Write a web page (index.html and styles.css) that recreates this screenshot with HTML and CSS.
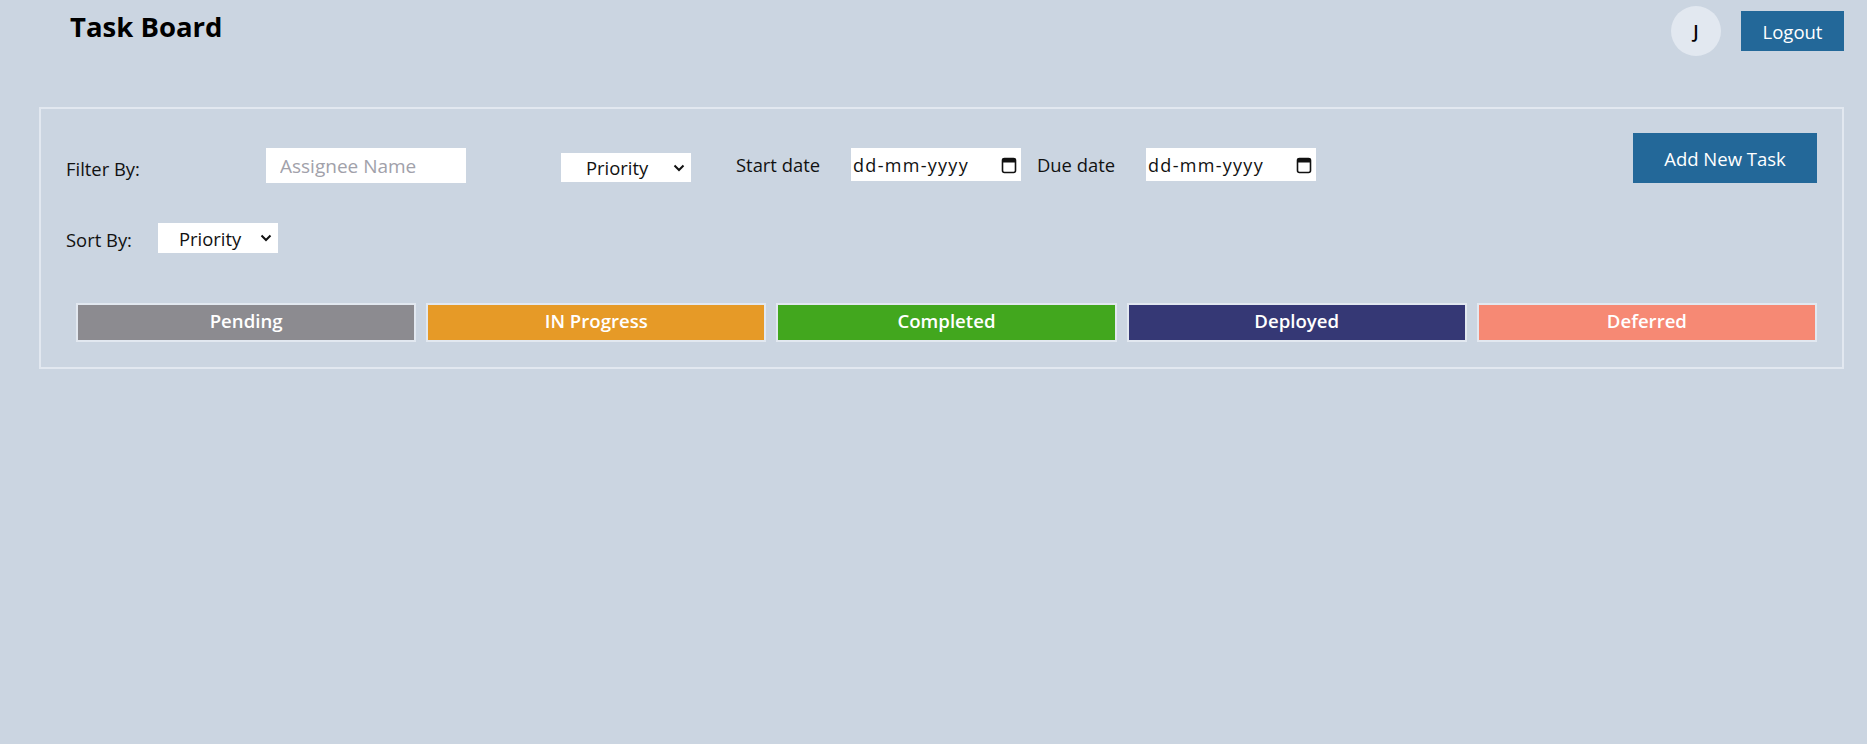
FILE: index.html
```html
<!DOCTYPE html>
<html lang="en">
<head>
<meta charset="utf-8">
<title>Task Board</title>
<link rel="stylesheet" href="styles.css">
</head>
<body>
<header class="header">
  <h1 class="title">Task Board</h1>
  <div class="user">
    <div class="avatar">J</div>
    <button class="btn logout">Logout</button>
  </div>
</header>
<main class="panel">
  <div class="filter-row">
    <span class="label label-filter">Filter By:</span>
    <input class="text-input" type="text" placeholder="Assignee Name">
    <span class="select-wrap select-filter">
      <select class="select"><option>Priority</option></select>
      <svg class="chevron" viewBox="0 0 12 8" width="12" height="8"><path d="M1.5 1.5 L6 6 L10.5 1.5" fill="none" stroke="#111" stroke-width="2"/></svg>
    </span>
    <span class="label label-start">Start date</span>
    <span class="date-input">
      <span class="date-text">dd-mm-yyyy</span>
      <svg class="cal" viewBox="0 0 16 18" width="16" height="18"><rect x="1.5" y="2.5" width="13" height="14" rx="2" fill="none" stroke="#111" stroke-width="1.6"/><rect x="1.5" y="2.5" width="13" height="4" fill="#111"/></svg>
    </span>
    <span class="label label-due">Due date</span>
    <span class="date-input">
      <span class="date-text">dd-mm-yyyy</span>
      <svg class="cal" viewBox="0 0 16 18" width="16" height="18"><rect x="1.5" y="2.5" width="13" height="14" rx="2" fill="none" stroke="#111" stroke-width="1.6"/><rect x="1.5" y="2.5" width="13" height="4" fill="#111"/></svg>
    </span>
    <button class="btn add-task">Add New Task</button>
  </div>
  <div class="sort-row">
    <span class="label label-sort">Sort By:</span>
    <span class="select-wrap select-sort">
      <select class="select"><option>Priority</option></select>
      <svg class="chevron" viewBox="0 0 12 8" width="12" height="8"><path d="M1.5 1.5 L6 6 L10.5 1.5" fill="none" stroke="#111" stroke-width="2"/></svg>
    </span>
  </div>
  <div class="status-grid">
    <div class="status pending">Pending</div>
    <div class="status progress">IN Progress</div>
    <div class="status completed">Completed</div>
    <div class="status deployed">Deployed</div>
    <div class="status deferred">Deferred</div>
  </div>
</main>
</body>
</html>
```
FILE: styles.css
```css
* { box-sizing: border-box; }

body {
  margin: 0;
  background: #cbd5e1;
  font-family: "Open Sans", "Noto Sans", sans-serif;
  color: #111;
}

.header {
  display: flex;
  justify-content: space-between;
  align-items: flex-start;
  height: 107px;
  padding: 0 23px 0 70px;
}

.title {
  margin: 10px 0 0;
  font-size: 27.5px;
  line-height: 1.2;
  font-weight: 700;
  color: #000;
}

.user {
  display: flex;
  align-items: flex-start;
  gap: 20px;
  padding-top: 6px;
}

.avatar {
  width: 50px;
  height: 50px;
  border-radius: 50%;
  background: #e2e8f0;
  display: flex;
  align-items: center;
  justify-content: center;
  font-size: 18px;
  font-weight: 600;
  color: #000;
}

.btn {
  border: none;
  background: #236899;
  color: #fff;
  font-family: inherit;
  font-size: 18.5px;
  padding: 0;
  cursor: pointer;
}

.logout {
  margin-top: 5px;
  width: 103px;
  height: 40px;
}

.panel {
  margin: 0 23px 0 39px;
  border: 2px solid #e2e8f0;
  padding: 24px 25px 25px 25px;
}

.filter-row {
  display: flex;
  align-items: flex-start;
  height: 50px;
}

.label {
  font-size: 18.4px;
  line-height: 24px;
  color: #111;
}

.label-filter { width: 200px; margin-top: 24px; }
.label-start { width: 115px; margin-left: 45px; margin-top: 20px; }
.label-due { width: 109px; margin-left: 16px; margin-top: 20px; }
.label-sort { width: 92px; margin-top: 5px; }

.text-input {
  width: 200px;
  height: 35px;
  margin-top: 15px;
  border: none;
  outline: none;
  background: #fff;
  padding: 0 0 0 14px;
  font-family: inherit;
  font-size: 19px;
  color: #111;
}

.text-input::placeholder { color: #a1a1aa; }

.select-wrap {
  position: relative;
  display: inline-block;
}

.select-filter { margin-left: 95px; margin-top: 20px; }

.select {
  appearance: none;
  -webkit-appearance: none;
  border: none;
  outline: none;
  background: #fff;
  font-family: inherit;
  font-size: 18.4px;
  color: #111;
  display: block;
}

.select-filter .select {
  width: 130px;
  height: 29px;
  padding: 0 0 0 25px;
}

.select-sort .select {
  width: 120px;
  height: 30px;
  padding: 0 0 0 21px;
}

.chevron {
  position: absolute;
  right: 6px;
  top: 50%;
  margin-top: -4px;
  pointer-events: none;
}

.date-input {
  width: 170px;
  height: 33px;
  margin-top: 15px;
  background: #fff;
  display: flex;
  align-items: center;
  justify-content: space-between;
  padding: 0 4px 0 2px;
}

.date-text {
  font-size: 18px;
  letter-spacing: 1.3px;
  color: #111;
}

.cal { display: block; }

.add-task {
  margin-left: auto;
  width: 184px;
  height: 50px;
}

.sort-row {
  display: flex;
  align-items: flex-start;
  margin-top: 40px;
  height: 30px;
}

.status-grid {
  display: grid;
  grid-template-columns: repeat(5, 1fr);
  margin-top: 50px;
}

.status {
  margin-left: 10px;
  height: 39px;
  border: 2px solid #e2e8f0;
  color: #fff;
  font-weight: 600;
  font-size: 18.6px;
  line-height: 32px;
  text-align: center;
}

.pending { background: #8c8b90; }
.progress { background: #e69a27; }
.completed { background: #42a71e; }
.deployed { background: #353875; }
.deferred { background: #f68974; }
```
